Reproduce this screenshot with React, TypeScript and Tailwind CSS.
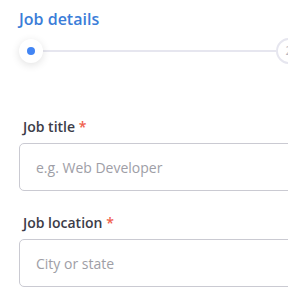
import React from "react";

export default function App() {
  const font = { fontFamily: '"Open Sans", "Noto Sans", sans-serif' };
  return (
    <div className="w-[288px] h-[288px] overflow-hidden bg-white" style={font}>
      <div className="w-[320px] pl-[19px] pt-[7px]">
        <div className="text-[16px] leading-[24px] font-semibold text-[#3b7dd8]">Job details</div>
        <div className="relative mt-[8px] h-[24px] flex items-center">
          <div className="w-[24px] h-[24px] rounded-full bg-white shadow-[0_2px_8px_rgba(0,0,0,0.12)] flex items-center justify-center shrink-0 z-10">
            <div className="w-[8px] h-[8px] rounded-full bg-[#4285f4]" />
          </div>
          <div className="w-[233px] h-[2px] bg-[#e6e6ef] shrink-0" />
          <div className="w-[26px] h-[26px] rounded-full border-2 border-[#e6e6ef] bg-white flex items-center justify-center text-[12px] text-[#b5b5c0] shrink-0">
            2
          </div>
        </div>
        <div className="mt-[54px] flex flex-col">
          <label className="pl-[4px] text-[14px] leading-[20px] font-semibold text-[#3c3c48]">
            Job title <span className="text-[#f0604d]">*</span>
          </label>
          <div className="mt-[6px] h-[48px] w-[300px] rounded-[5px] border border-[#cacad2] flex items-center pl-[16px] text-[14px] text-[#9e9ea6]">
            e.g. Web Developer
          </div>
          <label className="mt-[22px] pl-[4px] text-[14px] leading-[20px] font-semibold text-[#3c3c48]">
            Job location <span className="text-[#f0604d]">*</span>
          </label>
          <div className="mt-[6px] h-[48px] w-[300px] rounded-[5px] border border-[#cacad2] flex items-center pl-[16px] text-[14px] text-[#9e9ea6]">
            City or state
          </div>
        </div>
      </div>
    </div>
  );
}
